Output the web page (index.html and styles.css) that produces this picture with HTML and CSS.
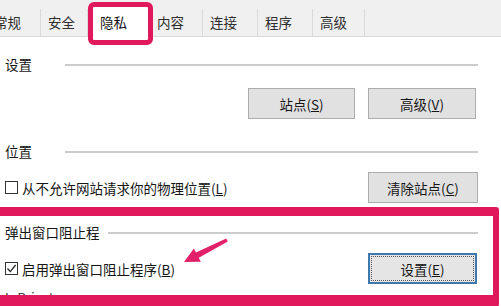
FILE: index.html
```html
<!DOCTYPE html>
<html lang="zh-CN">
<head>
    <meta charset="UTF-8">
    <title>Internet 选项 - 隐私</title>
    <link rel="stylesheet" href="styles.css">
</head>
<body>
    <div class="dialog">
        <div class="tabs">
            <div class="tab tab-first">常规</div>
            <div class="tab tab-security">安全</div>
            <div class="tab tab-active">隐私</div>
            <div class="tab tab-content">内容</div>
            <div class="tab tab-connect">连接</div>
            <div class="tab tab-program">程序</div>
            <div class="tab tab-advanced">高级</div>
        </div>

        <div class="panel">
            <div class="group-head head-settings">
                <span class="group-title">设置</span>
                <span class="group-line"></span>
            </div>
            <div class="row row-buttons">
                <button class="btn btn-sites">站点(<u>S</u>)</button>
                <button class="btn btn-advanced">高级(<u>V</u>)</button>
            </div>

            <div class="group-head head-location">
                <span class="group-title">位置</span>
                <span class="group-line"></span>
            </div>
            <div class="row row-location">
                <label class="check">
                    <span class="check-box"></span>
                    <span>从不允许网站请求你的物理位置(<u>L</u>)</span>
                </label>
                <button class="btn btn-clear">清除站点(<u>C</u>)</button>
            </div>

            <div class="group-head head-popup">
                <span class="group-title">弹出窗口阻止程</span>
                <span class="group-line"></span>
            </div>
            <div class="row row-popup">
                <label class="check">
                    <span class="check-box">
                        <svg width="11" height="11" viewBox="0 0 11 11"><path d="M1.5 5.5 L4.3 8.6 L9.6 2" fill="none" stroke="#222" stroke-width="1.3"/></svg>
                    </span>
                    <span>启用弹出窗口阻止程序(<u>B</u>)</span>
                </label>
                <button class="btn btn-focus">设置(<u>E</u>)</button>
            </div>

            <div class="group-head head-private">
                <span class="group-title">InPrivate</span>
            </div>
        </div>

        <!-- annotation marks drawn over the dialog -->
        <div class="mark mark-tab"></div>
        <div class="mark mark-popup"></div>
        <svg class="arrow" width="501" height="306" viewBox="0 0 501 306">
            <polygon points="184,262 200.8,261.8 198.8,257.8 227.8,241.4 226.2,238.6 195.9,252.5 193.9,248.5" fill="#e3206a"/>
        </svg>
    </div>
</body>
</html>
```

FILE: styles.css
```css
:root {
    --pink: #e0195c;
    --text: #161616;
    --line: #cccccc;
    --btn-bg: #e1e1e1;
    --btn-border: #adadad;
}

body {
    margin: 0;
    background: #ffffff;
    color: var(--text);
    font-family: "Noto Sans CJK SC", "Noto Sans", sans-serif;
    font-size: 13.5px;
    overflow: hidden;
}

.dialog {
    position: relative;
    width: 501px;
    height: 306px;
    overflow: hidden;
}

/* tab strip */
.tabs {
    display: flex;
    align-items: flex-end;
    height: 36px;
    background: #f0f0f0;
    border-bottom: 1px solid #d9d9d9;
}

.tab {
    box-sizing: border-box;
    height: 27px;
    line-height: 27px;
    padding-left: 7px;
    border-right: 1px solid #dadada;
    color: #2e2e2e;
    white-space: nowrap;
    overflow: hidden;
}

.tab-first { width: 54px; margin-left: -13px; }
.tab-security { width: 47px; }
.tab-active {
    width: 62px;
    height: 33px;
    line-height: 36px;
    padding-left: 12px;
    margin-bottom: -1px;
    background: #ffffff;
    color: #111;
}
.tab-content { width: 53px; }
.tab-connect { width: 55px; }
.tab-program { width: 55px; }
.tab-advanced { width: 52px; }

/* panel */
.panel {
    padding: 0 23px 0 5px;
}

.group-head {
    display: flex;
    align-items: center;
    gap: 8px;
    height: 20px;
}

.group-title {
    min-width: 52px;
    white-space: nowrap;
}

.group-line {
    flex: 1;
    height: 2px;
    margin-top: 2px;
    background: var(--line);
}

.head-settings { margin-top: 17px; }
.head-location { margin-top: 22px; }
.head-popup { margin-top: 19px; }
.head-private { margin-top: 3px; color: #444; }

.row {
    display: flex;
    align-items: center;
    gap: 13px;
}

.row-buttons {
    justify-content: flex-end;
    margin-top: 14px;
    padding-right: 2px;
}

.row-location,
.row-popup {
    justify-content: space-between;
    margin-top: 11px;
}

.btn {
    box-sizing: border-box;
    height: 31px;
    padding: 0;
    background: var(--btn-bg);
    border: 1px solid var(--btn-border);
    border-radius: 0;
    color: var(--text);
    font-family: inherit;
    font-size: 13.5px;
}

.btn-sites { width: 107px; }
.btn-advanced { width: 108px; }
.btn-clear { width: 110px; }

.btn-focus {
    width: 109px;
    margin-right: 1px;
    background: #e5e5e5;
    border: 2px solid #3d79ad;
    outline: 1px dotted #555;
    outline-offset: -4px;
}

.check {
    display: flex;
    align-items: center;
    gap: 4px;
    white-space: nowrap;
}

.check-box {
    box-sizing: border-box;
    display: flex;
    align-items: center;
    justify-content: center;
    width: 13px;
    height: 13px;
    border: 1px solid #333;
    background: #ffffff;
}

/* annotations */
.mark {
    position: absolute;
    box-sizing: border-box;
    border: 5px solid var(--pink);
    border-radius: 6px;
    pointer-events: none;
}

.mark-tab {
    left: 88px;
    top: 2px;
    width: 65px;
    height: 43px;
}

.mark-popup {
    left: -10px;
    top: 207px;
    width: 509px;
    height: 100px;
    border-width: 9px 6px 12px 6px;
    border-radius: 3px;
}

.arrow {
    position: absolute;
    left: 0;
    top: 0;
    pointer-events: none;
}
```
